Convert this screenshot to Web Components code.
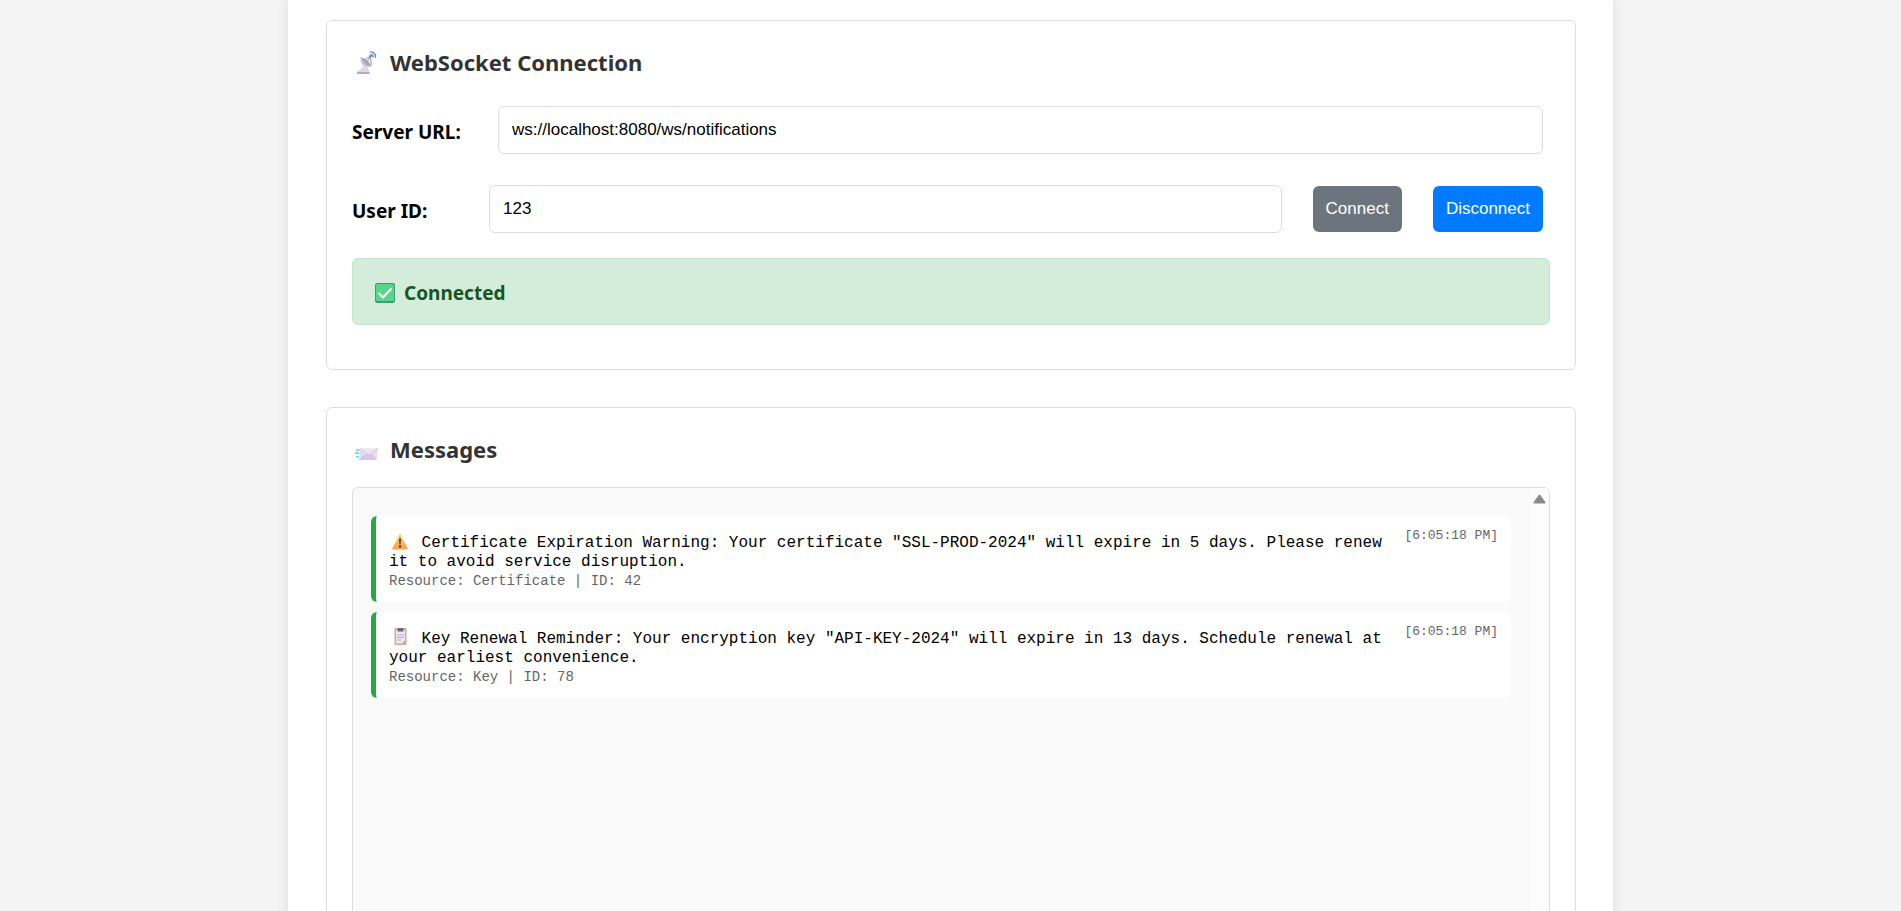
<!DOCTYPE html>
<html lang="en">
<head>
<meta charset="utf-8">
<title>WebSocket Notifications</title>
<style>
html { scrollbar-width: none; }
body { margin: 0; background: #f4f4f4; font-family: "Noto Sans", "Open Sans", sans-serif; }
</style>
</head>
<body>
<notify-app></notify-app>
<script>
const define = (name, html, setup) => {
  const template = document.createElement('template');
  template.innerHTML = html;
  customElements.define(name, class extends HTMLElement {
    connectedCallback() {
      if (this.shadowRoot) return;
      this.attachShadow({ mode: 'open' }).append(template.content.cloneNode(true));
      if (setup) setup(this, this.shadowRoot);
    }
  });
};

const icons = {
  dish: `<svg viewBox="0 0 24 24">
    <path d="M2 24v-3q5-1 6-5l5 .5 2 5.500v2z" fill="#ded5e6"/><path d="M2 22h13v2H2z" fill="#b5a6bd"/>
    <path d="M6.500 6.500C4 12 9 19 17.500 16z" fill="#d0c4d8"/><path d="M6.500 6.500Q14 9 17.500 16 9 16 6.500 6.500z" fill="#b3a4bd"/>
    <path d="M9.500 9.500L16 5.500l1 9M16 5.500L12 12" fill="none" stroke="#9a8da2"/><circle cx="16" cy="5.500" r="1.300" fill="#8d8094"/>
    <path d="M15.500 1q6 0 6 6M16 3.700q3 0 3 3" fill="none" stroke="#4d7de6" stroke-width="1.300"/></svg>`,
  mail: `<svg viewBox="0 -2 24 24">
    <path d="M5.500 9H24l-1.500 12H4z" fill="#e7dcee"/><path d="M4 21l8-7 2 1 2-1 6.500 7z" fill="#d9c5ef"/>
    <path d="M5.500 9L14 16l10-7z" fill="#ede4ec"/><path d="M5.500 9L14 16l10-7M4 21l8-6.500M22.500 21l-6-6.500" fill="none" stroke="#cdbbd8" stroke-width=".7"/>
    <path d="M1 10.500h4M0 14h4.500M1 17.500h3" stroke="#5fd2f6" stroke-width="1.500"/></svg>`,
  check: `<svg viewBox="0 0 20 20"><rect width="20" height="20" rx="2" fill="#36a36e"/>
    <rect x="1" y="1" width="18" height="17" rx="1.500" fill="#56d58c"/><path d="M3.500 10l4.500 4.500L16.500 5.500" fill="none" stroke="#fff" stroke-width="2"/></svg>`,
  warning: `<svg viewBox="0 0 18 18"><defs><linearGradient id="g" x2="0" y2="1"><stop stop-color="#f7cf58"/><stop offset="1" stop-color="#fda452"/></linearGradient></defs>
    <path d="M9 2.500l7.500 14.500h-15z" fill="url(#g)" stroke="url(#g)" stroke-linejoin="round"/><path d="M8 6.500h2l-.4 6H8.400z" fill="#503c3d"/><circle cx="9" cy="14.500" r="1.200" fill="#503c3d"/></svg>`,
  clipboard: `<svg viewBox="0 0 18 18"><rect x="3.500" y="0" width="12" height="17" rx="1" fill="#dfa68c"/>
    <path d="M5 2h9v10.500L11 15.500H5z" fill="#ece5f3"/><path d="M14 12.500v3H11z" fill="#b9aac6"/>
    <path d="M6.500 1q0-1 2-1h2q2 0 2 1v2.500h-6z" fill="#6c6478"/><path d="M6 7h7M6 9.500h7M6 12h4" stroke="#b9afc4"/></svg>`
};

define('glyph-icon', `<style>
  :host { display: inline-block; width: 20px; height: 20px; }
  svg { display: block; width: 100%; height: 100%; overflow: visible; }
</style><span></span>`, (el, root) => {
  root.querySelector('span').innerHTML = icons[el.getAttribute('name')];
});

define('section-card', `<style>
  :host { display: block; padding: 24px 25px 25px; border: 1px solid #ddd; border-radius: 6px; }
  h2 { display: flex; align-items: center; gap: 12px; margin: 0 0 21px; padding-left: 3px;
       font-size: 22px; line-height: 34px; font-weight: 700; color: #333; }
  ::slotted(glyph-icon) { width: 23px; height: 23px; }
</style><h2><slot name="icon"></slot><slot name="title"></slot></h2><slot></slot>`);

define('field-row', `<style>
  :host { display: flex; align-items: center; height: 48px; padding-right: 7px; margin-bottom: 31px; }
  label { flex: none; box-sizing: border-box; width: var(--label-width); padding-top: 4px; font-size: 19px; line-height: 26px; font-weight: 700; }
  input { flex: 1; min-width: 0; box-sizing: border-box; height: 48px; padding: 0 13px; border: 1px solid #ddd; border-radius: 6px;
          font: 17px "Liberation Sans", Arial, sans-serif; color: #000; background: #fff; }
</style><label for="box"></label><input id="box" type="text"><slot></slot>`, (el, root) => {
  root.querySelector('label').textContent = el.getAttribute('label');
  root.querySelector('input').value = el.getAttribute('value');
});

define('action-button', `<style>
  :host { display: block; flex: none; margin-left: 31px; }
  button { display: block; height: 46px; padding: 0 13px; border: 0; border-radius: 6px; color: #fff; background: var(--fill);
           font: 17px "Liberation Sans", Arial, sans-serif; }
</style><button type="button"><slot></slot></button>`);

define('status-banner', `<style>
  :host { display: flex; align-items: center; gap: 9px; box-sizing: border-box; height: 67px; padding: 2px 22px 0; border: 1px solid #c3e6cb;
          border-radius: 6px; background: #d4edda; color: #155724; font-size: 19px; line-height: 26px; font-weight: 700; }
</style><slot></slot>`);

define('message-item', `<style>
  :host { display: flex; justify-content: space-between; align-items: flex-start; padding: 12px 13px 11px; border-left: 5px solid #28a745;
          border-radius: 6px; background: #fff; font: 16px/19px "Liberation Mono", "Courier New", monospace; }
  p { margin: 0; padding-top: 4px; }
  glyph-icon { width: 18px; height: 18px; margin: 0 3px 0 2px; vertical-align: -3px; }
  .meta { font-size: 14px; line-height: 19px; color: #666; }
  time { flex: none; font-size: 13px; line-height: 16px; color: #666; }
</style><div><p><slot></slot></p><div class="meta"></div></div><time></time>`, (el, root) => {
  const icon = document.createElement('glyph-icon');
  icon.setAttribute('name', el.getAttribute('icon'));
  root.querySelector('p').prepend(icon, ' ');
  root.querySelector('.meta').textContent = el.getAttribute('meta');
  root.querySelector('time').textContent = el.getAttribute('time');
});

define('message-list', `<style>
  :host { display: flex; min-height: 500px; box-sizing: border-box; border: 1px solid #ddd; border-radius: 6px; background: #fafafa; overflow: hidden; }
  .items { flex: 1; display: flex; flex-direction: column; gap: 10px; padding: 28px 19px 19px 18px; }
  .bar { width: 19px; background: #fcfcfc; }
  svg { display: block; margin: 6px auto 0; }
</style><div class="items"><slot></slot></div>
<div class="bar"><svg width="13" height="10" viewBox="0 0 13 10"><path d="M6.500 1.500L11.500 8.500H1.500z" fill="#8b8b8b" stroke="#8b8b8b" stroke-width="2" stroke-linejoin="round"/></svg></div>`);

define('notify-app', `<style>
  :host { display: block; box-sizing: border-box; max-width: 1325px; min-height: 100vh; margin: 0 auto; padding: 20px 37px 38px 38px;
          background: #fff; box-shadow: 0 0 12px rgba(0,0,0,.1); }
  section-card + section-card { margin-top: 37px; }
  .first { padding-bottom: 44px; }
  .url { --label-width: 146px; margin-top: 27px; }
  .user { --label-width: 137px; margin-bottom: 25px; }
  .connect { --fill: #6c757d; }
  .disconnect { --fill: #007bff; }
</style>
<section-card class="first">
  <glyph-icon slot="icon" name="dish"></glyph-icon><span slot="title">WebSocket Connection</span>
  <field-row class="url" label="Server URL:" value="ws://localhost:8080/ws/notifications"></field-row>
  <field-row class="user" label="User ID:" value="123">
    <action-button class="connect">Connect</action-button>
    <action-button class="disconnect">Disconnect</action-button>
  </field-row>
  <status-banner><glyph-icon name="check"></glyph-icon><span>Connected</span></status-banner>
</section-card>
<section-card>
  <glyph-icon slot="icon" name="mail"></glyph-icon><span slot="title">Messages</span>
  <message-list>
    <message-item icon="warning" time="[6:05:18 PM]" meta="Resource: Certificate | ID: 42">Certificate Expiration Warning: Your certificate "SSL-PROD-2024" will expire in 5 days. Please renew it to avoid service disruption.</message-item>
    <message-item icon="clipboard" time="[6:05:18 PM]" meta="Resource: Key | ID: 78">Key Renewal Reminder: Your encryption key "API-KEY-2024" will expire in 13 days. Schedule renewal at your earliest convenience.</message-item>
  </message-list>
</section-card>`);
</script>
</body>
</html>
